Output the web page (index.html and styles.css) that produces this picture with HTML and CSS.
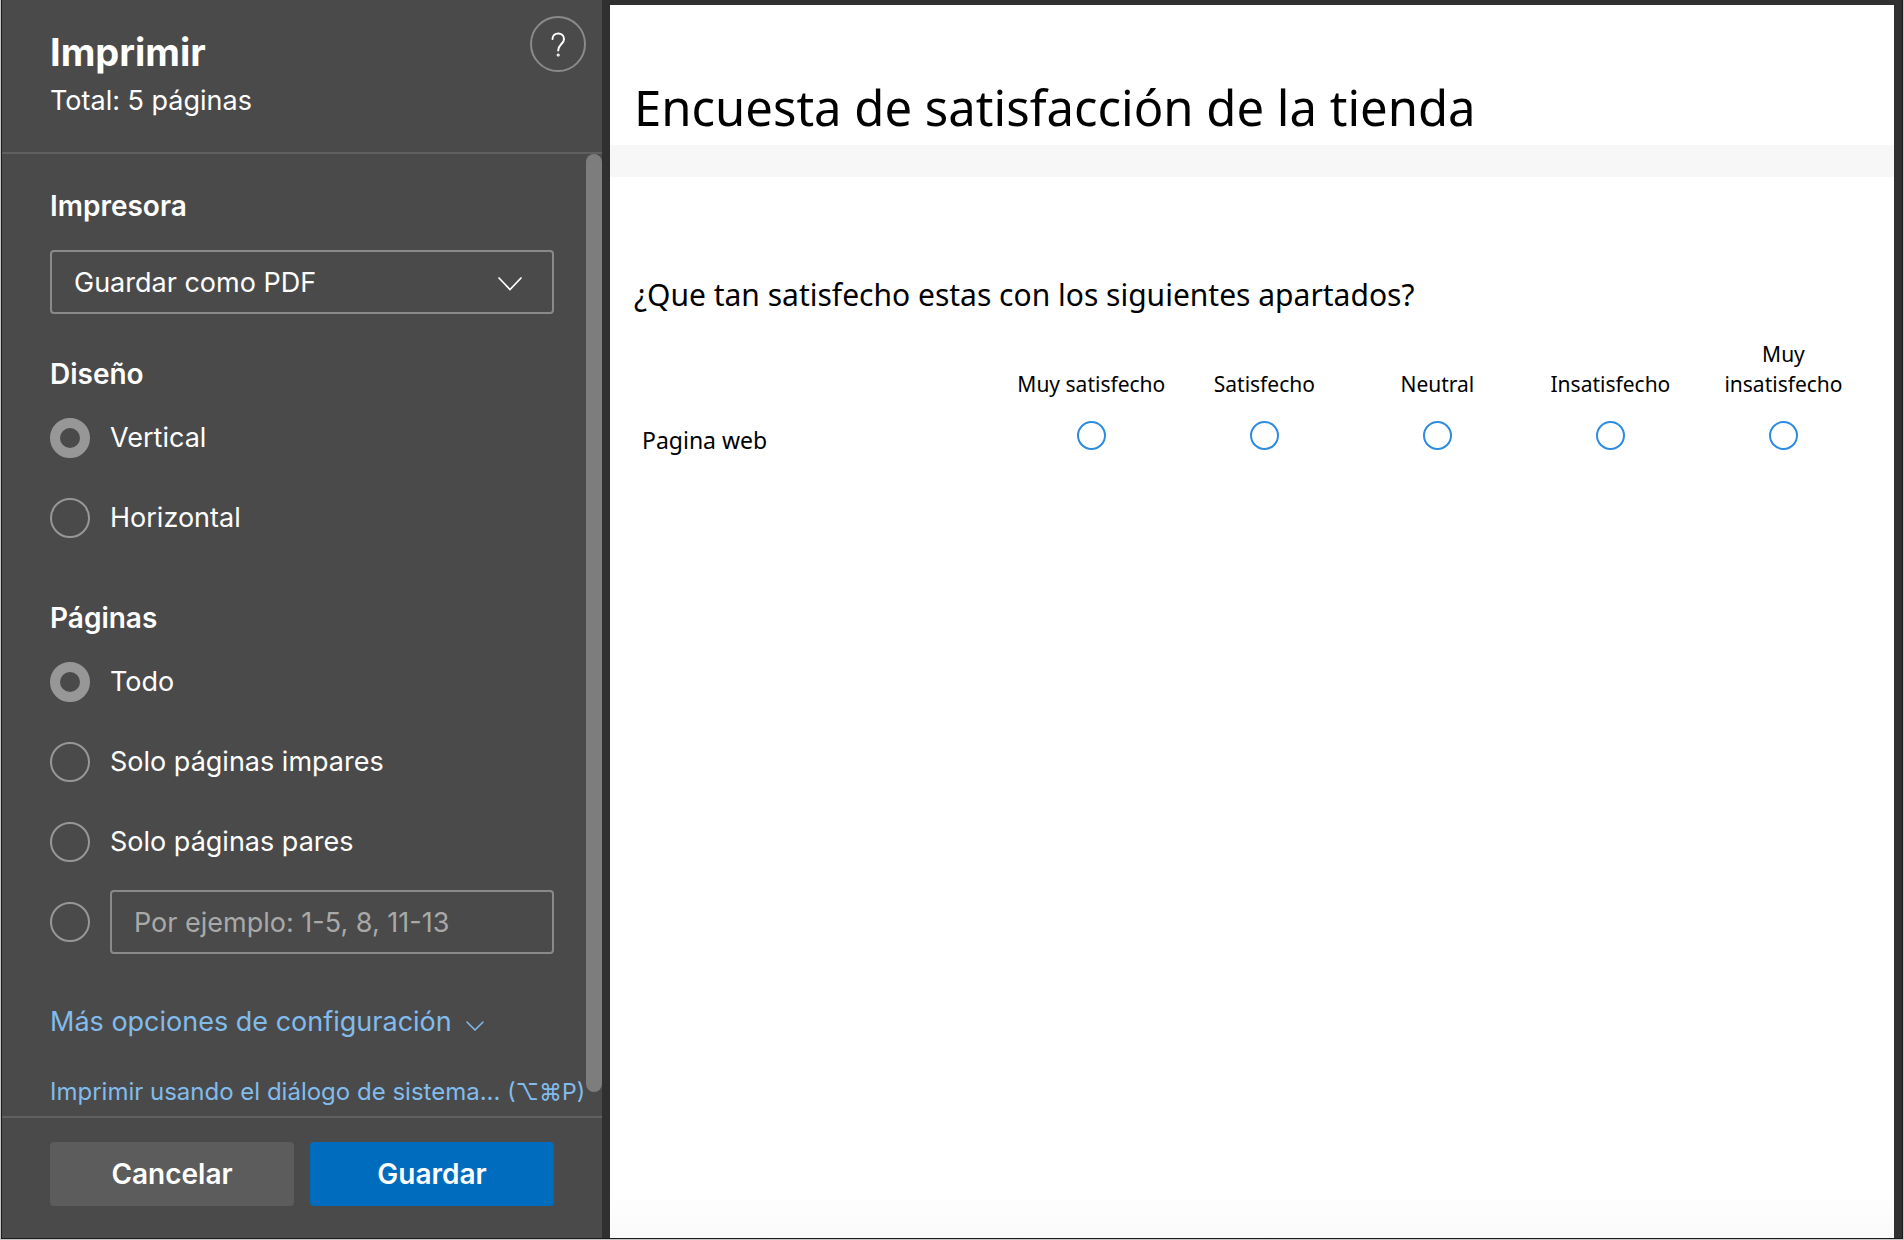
FILE: index.html
```
<!DOCTYPE html>
<html lang="es">
<head>
<meta charset="utf-8">
<title>Imprimir</title>
<link rel="stylesheet" href="styles.css">
</head>
<body>
<div class="dialog">
  <form class="settings">
    <header class="settings-header">
      <div>
        <h1 class="title">Imprimir</h1>
        <p class="total">Total: 5 páginas</p>
      </div>
      <button class="help" type="button" aria-label="Ayuda">
        <svg width="18" height="28" viewBox="0 0 18 28" fill="none" stroke="currentColor" stroke-width="2" stroke-linecap="round"><path d="M3.500 9C3.500 5.500 6 3.500 9.200 3.500S15 5.700 15 9C15 12 13.500 13 11.800 14.700C10 16.500 9.200 17.500 9.200 20.500"/><circle cx="9.200" cy="25" r="0.600"/></svg>
      </button>
    </header>

    <div class="settings-body">
      <div class="options">
        <section class="group">
          <h2 class="group-title"><label for="printer">Impresora</label></h2>
          <div class="select-wrap">
            <select id="printer" class="field select"><option>Guardar como PDF</option></select>
            <svg class="select-arrow" width="24" height="14" viewBox="0 0 24 14" fill="none" stroke="currentColor" stroke-width="1.700" stroke-linecap="round"><path d="M1 1L12 12.500L23 1"/></svg>
          </div>
        </section>

        <section class="group" role="radiogroup" aria-labelledby="layout-title">
          <h2 class="group-title" id="layout-title">Diseño</h2>
          <div class="choices">
            <label class="choice"><input class="radio" type="radio" name="layout" checked>Vertical</label>
            <label class="choice"><input class="radio" type="radio" name="layout">Horizontal</label>
          </div>
        </section>

        <section class="group" role="radiogroup" aria-labelledby="pages-title">
          <h2 class="group-title" id="pages-title">Páginas</h2>
          <div class="choices">
            <label class="choice"><input class="radio" type="radio" name="pages" checked>Todo</label>
            <label class="choice"><input class="radio" type="radio" name="pages">Solo páginas impares</label>
            <label class="choice"><input class="radio" type="radio" name="pages">Solo páginas pares</label>
            <div class="choice">
              <input class="radio" type="radio" name="pages" aria-label="Intervalo de páginas">
              <input class="field range" type="text" placeholder="Por ejemplo: 1-5, 8, 11-13" aria-label="Páginas">
            </div>
          </div>
        </section>

        <button class="more" type="button">Más opciones de configuración
          <svg width="18" height="10" viewBox="0 0 18 10" fill="none" stroke="currentColor" stroke-width="1.500" stroke-linecap="round"><path d="M1 1L9 9L17 1"/></svg>
        </button>
        <a class="system-link" href="#">Imprimir usando el diálogo de sistema... <span class="shortcut">(⌥⌘P)</span></a>
      </div>
      <div class="scrollbar"></div>
    </div>

    <footer class="settings-footer">
      <button class="button" type="button">Cancelar</button>
      <button class="button primary" type="submit">Guardar</button>
    </footer>
  </form>

  <main class="preview">
    <article class="sheet">
      <h2 class="survey-title">Encuesta de satisfacción de la tienda</h2>
      <div class="question">
        <h3 class="question-title">¿Que tan satisfecho estas con los siguientes apartados?</h3>
        <table class="matrix">
          <thead>
            <tr><td class="row-head"></td><th scope="col">Muy satisfecho</th><th scope="col">Satisfecho</th><th scope="col">Neutral</th><th scope="col">Insatisfecho</th><th scope="col">Muy insatisfecho</th></tr>
          </thead>
          <tbody>
            <tr>
              <th class="row-head" scope="row">Pagina web</th>
              <td><input class="mark" type="radio" name="web" aria-label="Muy satisfecho"></td>
              <td><input class="mark" type="radio" name="web" aria-label="Satisfecho"></td>
              <td><input class="mark" type="radio" name="web" aria-label="Neutral"></td>
              <td><input class="mark" type="radio" name="web" aria-label="Insatisfecho"></td>
              <td><input class="mark" type="radio" name="web" aria-label="Muy insatisfecho"></td>
            </tr>
          </tbody>
        </table>
      </div>
    </article>
  </main>
</div>
</body>
</html>
```
FILE: styles.css
```
* { box-sizing: border-box; }

body {
  margin: 0;
  background: #c4c4c4;
  color: #fff;
  font: 400 27px/34px Inter, "DejaVu Sans", sans-serif;
}

h1, h2, h3, p { margin: 0; }
button, input, select { margin: 0; font: inherit; color: inherit; }
button { border: 0; padding: 0; background: none; cursor: pointer; }

.dialog {
  display: flex;
  min-height: calc(100vh - 1px);
  margin: 0 1px 1px;
  border: solid #1c1c1c;
  border-width: 0 1px 1px;
  background: #303030;
}

/* Settings column */
.settings {
  display: flex;
  flex-direction: column;
  flex: 0 0 600px;
  min-width: 0;
  background: #4a4a4a;
}

.settings-header {
  display: flex;
  justify-content: space-between;
  align-items: flex-start;
  height: 154px;
  padding: 16px 16px 0 48px;
  border-bottom: 2px solid #606060;
}

.title { padding-top: 12px; font-size: 38px; line-height: 48px; font-weight: 700; }
.total { padding-top: 8px; }

.help {
  display: grid;
  place-items: center;
  width: 56px;
  height: 56px;
  border: 2px solid #8a8a8a;
  border-radius: 50%;
}

.settings-body { display: flex; flex: 1; }

.options {
  display: flex;
  flex-direction: column;
  align-items: flex-start;
  flex: 1;
  min-width: 0;
  padding: 35px 0 8px 48px;
}

.scrollbar {
  flex: 0 0 16px;
  margin-bottom: 24px;
  border-radius: 8px;
  background: #7d7d7d;
}

.group { width: 504px; margin-bottom: 51px; }
.group:first-child { margin-bottom: 43px; }
.group-title { margin-bottom: 15px; font-size: 28px; font-weight: 600; }

.field {
  width: 100%;
  height: 64px;
  padding: 1px 22px 0;
  border: 2px solid #8a8a8a;
  border-radius: 4px;
  background: transparent;
}

.select-wrap { position: relative; margin-top: 27px; }
.select { display: block; appearance: none; }
.select-arrow { position: absolute; right: 32px; top: 27px; pointer-events: none; }

.choices { display: grid; gap: 16px; }
.choice { display: flex; align-items: center; gap: 20px; height: 64px; }

.radio {
  flex: none;
  appearance: none;
  width: 40px;
  height: 40px;
  border: 2px solid #979797;
  border-radius: 50%;
}
.radio:checked { border-width: 10px; }

.range { flex: 1; min-width: 0; }
.range::placeholder { color: #a9a9a9; opacity: 1; }

.more { display: flex; align-items: center; gap: 14px; margin-bottom: 39px; color: #82bcec; }
.more svg { margin-top: 8px; }
.system-link { font-size: 24px; line-height: 28px; white-space: nowrap; color: #82bcec; text-decoration: none; }
.shortcut { font-size: 23px; }

.settings-footer {
  display: flex;
  gap: 16px;
  height: 122px;
  padding: 24px 48px 0;
  border-top: 2px solid #606060;
}

.button {
  flex: 0 0 244px;
  height: 64px;
  border-radius: 4px;
  background: #5c5c5c;
  font-size: 28px;
  font-weight: 600;
}
.primary { background: #006cbe; }

/* Page preview */
.preview { display: flex; flex: 1; min-width: 0; padding: 5px 8px 0; }

.sheet {
  flex: 1;
  min-width: 0;
  background: linear-gradient(to top, #fafafa, #fff 48px);
  color: #000;
  font-family: "Noto Sans", sans-serif;
}

.survey-title {
  padding: 68px 24px 4px;
  border-bottom: 32px solid #f7f7f7;
  font-size: 49px;
  line-height: 68px;
  font-weight: 400;
}

.question { padding: 96px 24px 0; }
.question-title { font-size: 30px; line-height: 44px; font-weight: 400; }

.matrix {
  width: 100%;
  margin-top: 22px;
  border-collapse: collapse;
  table-layout: fixed;
  font-size: 21px;
  line-height: 30px;
  text-align: center;
}
.matrix th, .matrix td { padding: 0; font-weight: 400; }
.matrix thead th { padding: 0 8px; vertical-align: bottom; }
.matrix .row-head { width: 30%; padding: 26px 8px 0; text-align: left; font-size: 23px; }
.matrix tbody td { padding-top: 22px; vertical-align: top; }

.mark {
  display: block;
  appearance: none;
  width: 29px;
  height: 29px;
  margin: 0 auto;
  border: 2px solid #2b8ce0;
  border-radius: 50%;
}
```
